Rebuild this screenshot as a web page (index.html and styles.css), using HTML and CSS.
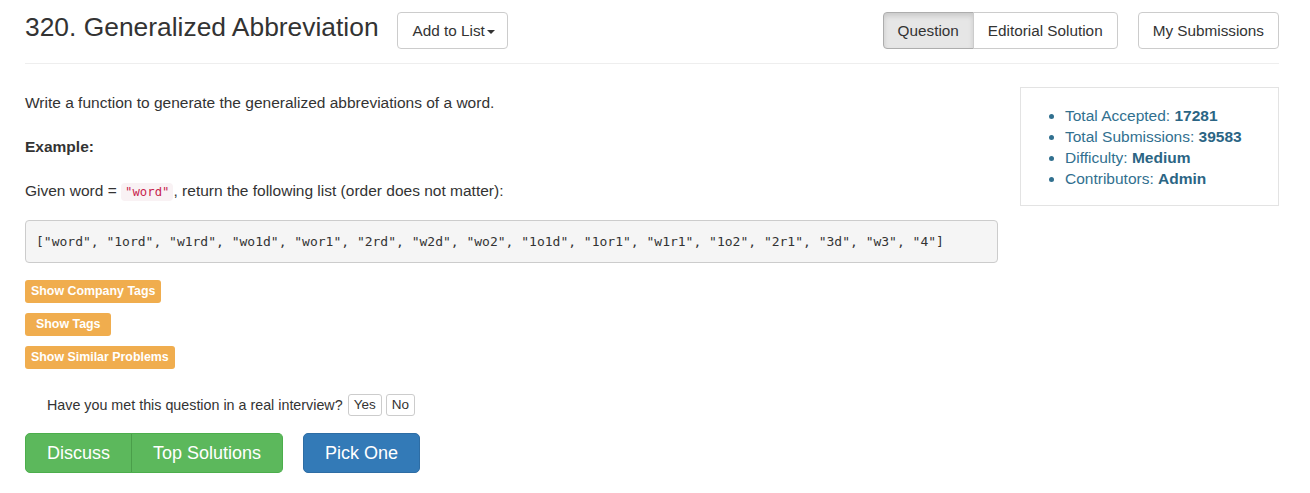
FILE: index.html
```html
<!DOCTYPE html>
<html lang="en">
<head>
<meta charset="utf-8">
<title>320. Generalized Abbreviation</title>
<link rel="stylesheet" href="styles.css">
</head>
<body>
<div class="page">
  <div class="header">
    <div class="header-left">
      <h1 class="title">320. Generalized Abbreviation</h1>
      <button class="btn btn-default btn-list">Add to List<span class="caret"></span></button>
    </div>
    <div class="header-right">
      <div class="btn-group">
        <button class="btn btn-default active">Question</button>
        <button class="btn btn-default">Editorial Solution</button>
      </div>
      <button class="btn btn-default">My Submissions</button>
    </div>
  </div>
  <div class="main">
    <div class="content">
      <p>Write a function to generate the generalized abbreviations of a word.</p>
      <p><b>Example:</b></p>
      <p class="lead-in">Given word = <code>"word"</code>, return the following list (order does not matter):</p>
      <pre>["word", "1ord", "w1rd", "wo1d", "wor1", "2rd", "w2d", "wo2", "1o1d", "1or1", "w1r1", "1o2", "2r1", "3d", "w3", "4"]</pre>
      <div class="tags">
        <div><span class="label">Show Company Tags</span></div>
        <div><span class="label label-wide">Show Tags</span></div>
        <div><span class="label">Show Similar Problems</span></div>
      </div>
      <div class="interview">
        <span class="q">Have you met this question in a real interview?</span>
        <button class="btn-xs">Yes</button>
        <button class="btn-xs">No</button>
      </div>
      <div class="actions">
        <div class="btn-group lg">
          <button class="btn-lg green">Discuss</button>
          <button class="btn-lg green">Top Solutions</button>
        </div>
        <button class="btn-lg blue">Pick One</button>
      </div>
    </div>
    <div class="side">
      <ul class="stats">
        <li>Total Accepted: <b>17281</b></li>
        <li>Total Submissions: <b>39583</b></li>
        <li>Difficulty: <b>Medium</b></li>
        <li>Contributors: <b>Admin</b></li>
      </ul>
    </div>
  </div>
</div>
</body>
</html>
```
FILE: styles.css
```css
* { box-sizing: border-box; }
body {
  margin: 0;
  font-family: "Liberation Sans", Arial, sans-serif;
  font-size: 15.5px;
  color: #333;
  background: #fff;
}
.page {
  width: 1254px;
  margin-left: 25px;
}
.header {
  display: flex;
  justify-content: space-between;
  align-items: flex-start;
  padding-top: 12px;
  padding-bottom: 14px;
  border-bottom: 1px solid #eee;
}
.header-left, .header-right {
  display: flex;
  align-items: flex-start;
}
.header-right { gap: 20px; }
.title {
  margin: 0 18px 0 0;
  font-size: 26.4px;
  line-height: 30px;
  font-weight: 400;
  color: #333;
}
.btn {
  font-family: inherit;
  font-size: 15.3px;
  line-height: 21px;
  padding: 7px 14px;
  height: 37px;
  background: #fff;
  color: #333;
  border: 1px solid #ccc;
  border-radius: 4px;
  cursor: pointer;
  white-space: nowrap;
}
.btn-list { padding: 7px 12px 7px 15px; }
.caret {
  display: inline-block;
  width: 0;
  height: 0;
  margin-left: 2px;
  vertical-align: middle;
  border-top: 4px solid #333;
  border-left: 4px solid transparent;
  border-right: 4px solid transparent;
}
.btn-group { display: flex; }
.btn-group .btn:first-child { border-radius: 4px 0 0 4px; }
.btn-group .btn:last-child { border-radius: 0 4px 4px 0; margin-left: -1px; }
.btn.active {
  background: #e6e6e6;
  border-color: #adadad;
  box-shadow: inset 0 3px 5px rgba(0,0,0,.125);
}
.main {
  display: flex;
  align-items: flex-start;
}
.content {
  width: 973px;
  padding-top: 28px;
}
p {
  margin: 0 0 23px;
  line-height: 21px;
}
p.lead-in { margin-bottom: 17px; }
code {
  font-family: "DejaVu Sans Mono", "Liberation Mono", monospace;
  font-size: 12.3px;
  color: #c7254e;
  background: #f9f2f4;
  padding: 2px 4px;
  border-radius: 4px;
}
pre {
  margin: 0 0 17px;
  padding: 9px 10px;
  font-family: "DejaVu Sans Mono", "Liberation Mono", monospace;
  font-size: 13px;
  line-height: 23px;
  color: #333;
  background: #f5f5f5;
  border: 1px solid #ccc;
  border-radius: 4px;
}
.tags > div { margin-bottom: 10px; height: 23px; }
.label {
  display: inline-block;
  background: #f0ad4e;
  color: #fff;
  font-weight: 700;
  font-size: 12.4px;
  line-height: 17px;
  padding: 3px 6px;
  border-radius: 3px;
}
.label.label-wide { padding: 3px 11px; }
.interview {
  display: flex;
  align-items: center;
  padding-left: 22px;
  margin-top: 25px;
  height: 22px;
  font-size: 14.3px;
}
.interview .q { margin-right: 5px; }
.btn-xs {
  font-family: inherit;
  font-size: 13.5px;
  line-height: 18px;
  padding: 1px 5px;
  background: #fff;
  color: #333;
  border: 1px solid #ccc;
  border-radius: 3px;
  margin-right: 4px;
}
.actions {
  display: flex;
  gap: 20px;
  margin-top: 17px;
}
.btn-lg {
  font-family: inherit;
  font-size: 18px;
  line-height: 24px;
  padding: 7px 21px;
  height: 40px;
  color: #fff;
  border: 1px solid transparent;
  border-radius: 5px;
}
.green { background: #5cb85c; border-color: #4cae4c; }
.blue { background: #337ab7; border-color: #2e6da4; }
.btn-group.lg .btn-lg:first-child { border-radius: 5px 0 0 5px; }
.btn-group.lg .btn-lg:last-child { border-radius: 0 5px 5px 0; margin-left: -1px; border-left-color: #4a9e4a; }
.side {
  width: 259px;
  margin-left: 22px;
  margin-top: 23px;
  border: 1px solid #e3e3e3;
  padding: 17px 17px 16px;
}
.stats {
  margin: 0;
  padding-left: 27px;
  color: #31708f;
  line-height: 21px;
}
.stats b { color: #2b6584; }
```
